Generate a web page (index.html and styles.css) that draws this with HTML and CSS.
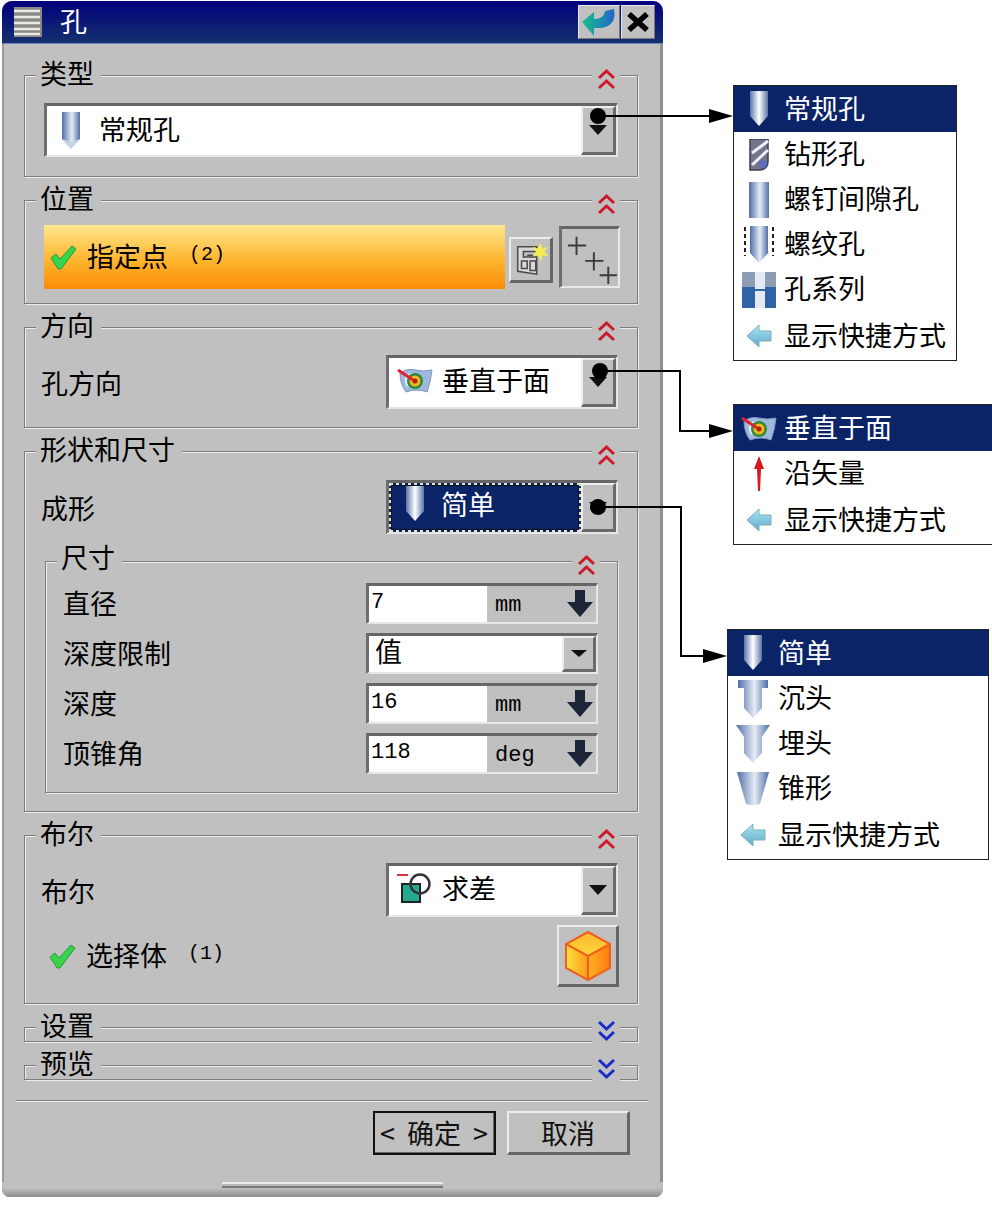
FILE: index.html
```html
<!DOCTYPE html>
<html lang="zh-CN">
  <head>
    <meta charset="UTF-8" />
    <title>孔</title>
    <link rel="stylesheet" href="styles.css">
  </head>
  <body>
    <svg class="defs" aria-hidden="true">
      <defs>
        <linearGradient id="gHole">
          <stop offset="0" stop-color="#4f6fa8" />
          <stop offset="0.55" stop-color="#e6ebf5" />
          <stop offset="1" stop-color="#4f6fa8" />
        </linearGradient>
        <linearGradient id="gHoleSel">
          <stop offset="0" stop-color="#5a75a8" />
          <stop offset="0.5" stop-color="#ffffff" />
          <stop offset="1" stop-color="#5a75a8" />
        </linearGradient>
        <linearGradient id="gArrow" x1="0" y1="0" x2="0" y2="1">
          <stop offset="0" stop-color="#a8e6f0" />
          <stop offset="1" stop-color="#5fa8cc" />
        </linearGradient>
        <linearGradient id="gCubeTop" x1="0" y1="0" x2="0" y2="1">
          <stop offset="0" stop-color="#ffb52e" />
          <stop offset="1" stop-color="#ffd93a" />
        </linearGradient>
        <linearGradient id="gCubeLeft" x1="0" y1="0" x2="1" y2="0">
          <stop offset="0" stop-color="#ffe23c" />
          <stop offset="1" stop-color="#ff9a1e" />
        </linearGradient>
        <linearGradient id="gCubeRight" x1="0" y1="0" x2="1" y2="0">
          <stop offset="0" stop-color="#ffb324" />
          <stop offset="1" stop-color="#ff7a10" />
        </linearGradient>
        <linearGradient id="gBack" x1="0" y1="0" x2="1" y2="0">
          <stop offset="0" stop-color="#14c08c" />
          <stop offset="1" stop-color="#2266c8" />
        </linearGradient>
      </defs>
      <symbol id="i-hole" viewBox="0 0 20 38">
        <path d="M1 0H19V27L10 37L1 27Z" fill="url(#gHole)" />
        <path d="M1 27L10 37L19 27L10 30Z" fill="#c8d3e6" />
      </symbol>
      <symbol id="i-hole-sel" viewBox="0 0 20 36">
        <path d="M1 0H19V25L10 35L1 25Z" fill="url(#gHoleSel)" />
      </symbol>
      <symbol id="i-drill" viewBox="0 0 20 32">
        <path d="M1 0H19V22Q19 31 10 31H1Z" fill="#73758a" stroke="#3c3f55" stroke-width="1.5" />
        <path d="M19 2L3 14M19 11L3 26" stroke="#f0f0f6" stroke-width="3" fill="none" />
        <circle cx="14" cy="25" r="4" fill="#5a6cc0" />
      </symbol>
      <symbol id="i-clear" viewBox="0 0 20 36">
        <rect width="20" height="36" fill="url(#gHole)" />
      </symbol>
      <symbol id="i-thread" viewBox="0 0 30 38">
        <path d="M6 0H24V27L15 37L6 27Z" fill="url(#gHole)" />
        <path d="M1 1V30M29 1V30" stroke="#222" stroke-width="2" stroke-dasharray="4 3" fill="none" />
      </symbol>
      <symbol id="i-series" viewBox="0 0 34 36">
        <rect width="13" height="15" fill="#8b9cb3" />
        <rect x="23" width="11" height="15" fill="#8b9cb3" />
        <rect y="15" width="13" height="21" fill="#2f63a6" />
        <rect x="23" y="15" width="11" height="21" fill="#2f63a6" />
        <rect x="13" width="10" height="36" fill="#e4e9f3" />
        <rect x="13" y="17" width="10" height="2" fill="#2f63a6" />
      </symbol>
      <symbol id="i-left" viewBox="0 0 26 24">
        <path d="M1 12L13 1V7H25V17H13V23Z" fill="url(#gArrow)" stroke="#7fb0bc" />
      </symbol>
      <symbol id="i-normal" viewBox="0 0 36 26">
        <path d="M3 6Q10 1 18 3T35 3Q34 14 30 25Q20 21 9 25Q3 17 3 6Z" fill="#9fb8dc" stroke="#7c96c0" />
        <path d="M8 8Q14 5 20 7L10 20Q7 15 8 8Z" fill="#e2ecf8" />
        <circle cx="18" cy="14" r="8" fill="#2c8a3c" />
        <circle cx="18" cy="14" r="5.5" fill="#f4b41c" />
        <circle cx="18" cy="14" r="2.5" fill="#a82010" />
        <path d="M1 3L16 13" stroke="#e0202c" stroke-width="3" />
      </symbol>
      <symbol id="i-up" viewBox="0 0 10 36">
        <path d="M5 0L10 13H7L6 35H4L3 13H0Z" fill="#d81820" />
      </symbol>
      <symbol id="i-cbore" viewBox="0 0 30 38">
        <path d="M0 0H30V8H24V28L15 38L6 28V8H0Z" fill="url(#gHole)" />
      </symbol>
      <symbol id="i-csink" viewBox="0 0 34 38">
        <path d="M0 0H34L26 12V28L17 38L8 28V12Z" fill="url(#gHole)" />
      </symbol>
      <symbol id="i-taper" viewBox="0 0 32 34">
        <path d="M0 0H32L23 32Q16 34 9 32Z" fill="url(#gHole)" />
      </symbol>
      <symbol id="i-check" viewBox="0 0 28 26">
        <path d="M2 14L7 10L11 15L23 2L27 5L12 25H9Z" fill="#35d44a" stroke="#2a9a3a" />
      </symbol>
      <symbol id="i-up-chev" viewBox="0 0 19 22">
        <path d="M2 10L9.5 3L17 10M2 20L9.5 13L17 20" fill="none" stroke="#cc1a2c" stroke-width="3" />
      </symbol>
      <symbol id="i-down-chev" viewBox="0 0 19 22">
        <path d="M2 2L9.5 9L17 2M2 12L9.5 19L17 12" fill="none" stroke="#1c2cc8" stroke-width="3" />
      </symbol>
      <symbol id="i-spin" viewBox="0 0 28 30">
        <path d="M9 1H19V13H27L14 28L1 13H9Z" fill="#1c2438" />
      </symbol>
      <symbol id="i-sub" viewBox="0 0 36 30">
        <path d="M0 2H11" stroke="#d83040" stroke-width="2" />
        <rect x="5" y="11" width="18" height="18" fill="#24a890" stroke="#222" stroke-width="2" />
        <circle cx="23" cy="11" r="9.5" fill="none" stroke="#333" stroke-width="2.5" />
      </symbol>
      <symbol id="i-cube" viewBox="0 0 48 52">
        <path d="M24 2L46 14L24 26L2 14Z" fill="url(#gCubeTop)" />
        <path d="M2 14L24 26V50L2 38Z" fill="url(#gCubeLeft)" />
        <path d="M46 14L24 26V50L46 38Z" fill="url(#gCubeRight)" />
        <path d="M24 2L46 14V38L24 50L2 38V14ZM2 14L24 26L46 14M24 26V50" fill="none" stroke="#f0601c" stroke-width="2" />
      </symbol>
      <symbol id="i-pts" viewBox="0 0 40 40">
        <path d="M6 7H26V12H12V18H26V36L6 33ZM16 16H22M10 22H16V30H10ZM19 22H25V32H19Z" fill="#d8d8d8" stroke="#4a4a4a" stroke-width="1.6" />
        <path d="M30 3L32 9L38 7L34 12L38 17L32 16L30 22L27 16L22 17L25 12L22 7L27 9Z" fill="#f4ee50" />
      </symbol>
      <symbol id="i-plus" viewBox="0 0 56 54">
        <path d="M5 14H24M14 5V24M23 30H42M32 21V40M38 45H56M47 36V54" stroke="#3a3a3a" stroke-width="2" fill="none" />
      </symbol>
      <symbol id="i-menu" viewBox="0 0 28 30">
        <rect width="28" height="30" fill="#8a8a86" />
        <path d="M0 4H26M0 10H26M0 16H26M0 22H26M0 27H26" stroke="#e8e8e4" stroke-width="2.6" />
      </symbol>
      <symbol id="i-back" viewBox="0 0 36 32">
        <path d="M33 3Q36 20 20 22L13 22V30L1 16L13 6V13Q23 13 24 5Z" fill="url(#gBack)" />
      </symbol>
      <symbol id="i-close" viewBox="0 0 24 22">
        <path d="M3 3L21 19M21 3L3 19" stroke="#000" stroke-width="5.5" fill="none" />
      </symbol>
    </svg>

    <div class="page">
      <div class="dialog">
        <div class="titlebar">
          <svg class="menu-icon"><use href="#i-menu" /></svg>
          <span class="title">孔</span>
          <span class="title-btn title-back"><svg class="ic-back"><use href="#i-back" /></svg></span>
          <span class="title-btn title-close"><svg class="ic-close"><use href="#i-close" /></svg></span>
        </div>

        <div class="body">
          <section class="group g-type">
            <span class="legend">类型</span>
            <span class="chev"><svg class="ic-chev"><use href="#i-up-chev" /></svg></span>
            <div class="combo combo-wide">
              <div class="combo-val pad-type">
                <svg class="ic-hole"><use href="#i-hole" /></svg>
                <span class="type-text">常规孔</span>
              </div>
              <span class="combo-btn"><i class="tri"></i></span>
            </div>
          </section>

          <section class="group g-pos">
            <span class="legend">位置</span>
            <span class="chev"><svg class="ic-chev"><use href="#i-up-chev" /></svg></span>
            <div class="pos-row">
              <div class="pos-bar">
                <svg class="ic-check"><use href="#i-check" /></svg>
                <span>指定点</span>
                <span class="count">(2)</span>
              </div>
              <span class="raised pts-btn"><svg class="ic-pts"><use href="#i-pts" /></svg></span>
              <span class="plus-box"><svg class="ic-plus"><use href="#i-plus" /></svg></span>
            </div>
          </section>

          <section class="group g-dir">
            <span class="legend">方向</span>
            <span class="chev"><svg class="ic-chev"><use href="#i-up-chev" /></svg></span>
            <div class="form-row">
              <label>孔方向</label>
              <div class="combo combo-small">
                <div class="combo-val">
                  <svg class="ic-normal"><use href="#i-normal" /></svg>
                  <span>垂直于面</span>
                </div>
                <span class="combo-btn"><i class="tri"></i></span>
              </div>
            </div>
          </section>

          <section class="group g-shape">
            <span class="legend">形状和尺寸</span>
            <span class="chev"><svg class="ic-chev"><use href="#i-up-chev" /></svg></span>
            <div class="form-row">
              <label>成形</label>
              <div class="combo combo-small">
                <div class="combo-val focused">
                  <svg class="ic-simple"><use href="#i-hole-sel" /></svg>
                  <span>简单</span>
                </div>
                <span class="combo-btn"><i class="tri"></i></span>
              </div>
            </div>

            <section class="group subgroup">
              <span class="legend">尺寸</span>
              <span class="chev"><svg class="ic-chev"><use href="#i-up-chev" /></svg></span>
              <div class="dim-row">
                <label>直径</label>
                <div class="field">
                  <span class="field-val">7</span>
                  <span class="unit">mm</span>
                  <svg class="ic-spin"><use href="#i-spin" /></svg>
                </div>
              </div>
              <div class="dim-row">
                <label>深度限制</label>
                <div class="field field-select">
                  <span class="select-val">值</span>
                  <span class="combo-btn"><i class="tri tri-small"></i></span>
                </div>
              </div>
              <div class="dim-row">
                <label>深度</label>
                <div class="field">
                  <span class="field-val">16</span>
                  <span class="unit">mm</span>
                  <svg class="ic-spin"><use href="#i-spin" /></svg>
                </div>
              </div>
              <div class="dim-row">
                <label>顶锥角</label>
                <div class="field">
                  <span class="field-val">118</span>
                  <span class="unit">deg</span>
                  <svg class="ic-spin"><use href="#i-spin" /></svg>
                </div>
              </div>
            </section>
          </section>

          <section class="group g-bool">
            <span class="legend">布尔</span>
            <span class="chev"><svg class="ic-chev"><use href="#i-up-chev" /></svg></span>
            <div class="form-row">
              <label>布尔</label>
              <div class="combo combo-small">
                <div class="combo-val">
                  <svg class="ic-sub"><use href="#i-sub" /></svg>
                  <span>求差</span>
                </div>
                <span class="combo-btn"><i class="tri"></i></span>
              </div>
            </div>
            <div class="body-row">
              <div class="body-pick">
                <svg class="ic-check"><use href="#i-check" /></svg>
                <span>选择体</span>
                <span class="count">(1)</span>
              </div>
              <span class="raised cube-btn"><svg class="ic-cube"><use href="#i-cube" /></svg></span>
            </div>
          </section>

          <section class="group g-closed">
            <span class="legend">设置</span>
            <span class="chev"><svg class="ic-chev"><use href="#i-down-chev" /></svg></span>
          </section>

          <section class="group g-closed">
            <span class="legend">预览</span>
            <span class="chev"><svg class="ic-chev"><use href="#i-down-chev" /></svg></span>
          </section>

          <div class="separator"></div>

          <div class="actions">
            <button class="btn btn-default">&lt; 确定 &gt;</button>
            <button class="btn">取消</button>
          </div>
        </div>

        <div class="footer"><span class="grip"></span></div>
      </div>

      <ul class="popup popup-type">
        <li class="selected"><span class="pop-ic"><svg class="ic-simple-pop"><use href="#i-hole-sel" /></svg></span><span class="pop-text">常规孔</span></li>
        <li><span class="pop-ic"><svg class="ic-drill"><use href="#i-drill" /></svg></span><span class="pop-text">钻形孔</span></li>
        <li><span class="pop-ic"><svg class="ic-clear"><use href="#i-clear" /></svg></span><span class="pop-text">螺钉间隙孔</span></li>
        <li><span class="pop-ic"><svg class="ic-thread"><use href="#i-thread" /></svg></span><span class="pop-text">螺纹孔</span></li>
        <li><span class="pop-ic"><svg class="ic-series"><use href="#i-series" /></svg></span><span class="pop-text">孔系列</span></li>
        <li><span class="pop-ic"><svg class="ic-left"><use href="#i-left" /></svg></span><span class="pop-text">显示快捷方式</span></li>
      </ul>

      <ul class="popup popup-dir">
        <li class="selected"><span class="pop-ic"><svg class="ic-normal"><use href="#i-normal" /></svg></span><span class="pop-text">垂直于面</span></li>
        <li><span class="pop-ic"><svg class="ic-up"><use href="#i-up" /></svg></span><span class="pop-text">沿矢量</span></li>
        <li><span class="pop-ic"><svg class="ic-left"><use href="#i-left" /></svg></span><span class="pop-text">显示快捷方式</span></li>
      </ul>

      <ul class="popup popup-shape">
        <li class="selected"><span class="pop-ic"><svg class="ic-simple-pop"><use href="#i-hole-sel" /></svg></span><span class="pop-text">简单</span></li>
        <li><span class="pop-ic"><svg class="ic-cbore"><use href="#i-cbore" /></svg></span><span class="pop-text">沉头</span></li>
        <li><span class="pop-ic"><svg class="ic-csink"><use href="#i-csink" /></svg></span><span class="pop-text">埋头</span></li>
        <li><span class="pop-ic"><svg class="ic-taper"><use href="#i-taper" /></svg></span><span class="pop-text">锥形</span></li>
        <li><span class="pop-ic"><svg class="ic-left"><use href="#i-left" /></svg></span><span class="pop-text">显示快捷方式</span></li>
      </ul>

      <!-- callout lines from the dropdown buttons to their menus -->
      <svg class="callouts" viewBox="0 0 992 1208">
        <circle cx="598" cy="116" r="8" />
        <path class="line" d="M598 116H715" />
        <path d="M709 109L733 116L709 123Z" />
        <circle cx="600" cy="371" r="8" />
        <path class="line" d="M600 371H680V431H715" />
        <path d="M709 424L733 431L709 438Z" />
        <circle cx="598" cy="507" r="8" />
        <path class="line" d="M598 507H681V656H710" />
        <path d="M703 649L727 656L703 663Z" />
      </svg>
    </div>
  </body>
</html>
```

FILE: styles.css
```css
* {
  box-sizing: border-box;
  margin: 0;
  padding: 0;
}

body {
  background: #fff;
  color: #000;
  font-family: "Noto Sans CJK SC", "Liberation Sans", sans-serif;
  font-size: 27px;
  line-height: 1;
  overflow: hidden;
}

.defs {
  position: absolute;
  width: 0;
  height: 0;
}

.page {
  position: relative;
  width: 992px;
  height: 1208px;
  overflow: hidden;
  padding: 1px 0 0 2px;
}

/* dialog frame */

.dialog {
  width: 661px;
  background: #c0c0c0;
  border-radius: 10px 10px 8px 8px;
  overflow: hidden;
  box-shadow: inset -3px 0 0 #8f8f8f, inset 2px 0 0 #9a9a9a;
}

.titlebar {
  display: flex;
  align-items: center;
  height: 43px;
  padding: 0 8px 0 12px;
  background: linear-gradient(#00007c, #15316e);
  border-bottom: 1px solid #6f86bd;
}

.menu-icon {
  width: 28px;
  height: 30px;
}

.title {
  margin-left: 18px;
  padding-bottom: 3px;
  color: #fff;
  flex: 1;
}

.title-btn {
  display: flex;
  align-items: center;
  justify-content: center;
  height: 34px;
  background: #c0c0c0;
  border: 1px solid;
  border-color: #e8e8e8 #777 #777 #e8e8e8;
}

.title-back {
  width: 42px;
}

.title-close {
  width: 34px;
  margin-left: 1px;
}

.ic-back {
  width: 36px;
  height: 32px;
}

.ic-close {
  width: 24px;
  height: 22px;
}

.body {
  display: flex;
  flex-direction: column;
  gap: 23px;
  padding: 31px 25px 0 22px;
}

/* group frames */

.group {
  position: relative;
  border: 1px solid #7d7d7d;
  box-shadow: inset 1px 1px 0 #ececec, 1px 1px 0 #ececec;
  padding: 0 19px 0 16px;
}

.legend {
  position: absolute;
  left: 11px;
  top: -17px;
  padding: 0 7px 0 4px;
  background: #c0c0c0;
  line-height: 28px;
}

.chev {
  position: absolute;
  right: 17px;
  top: -10px;
  width: 28px;
  height: 26px;
  display: flex;
  justify-content: center;
  align-items: center;
  background: #c0c0c0;
}

.ic-chev {
  width: 19px;
  height: 22px;
}

.g-type {
  padding-top: 27px;
  padding-bottom: 19px;
}

.g-pos {
  padding-top: 24px;
  padding-bottom: 14px;
}

.g-dir {
  padding-top: 27px;
  padding-bottom: 18px;
}

.g-shape {
  padding-top: 28px;
  padding-bottom: 18px;
}

.g-bool {
  padding-top: 27px;
  padding-bottom: 16px;
}

.g-closed {
  height: 15px;
  padding: 0;
}

.subgroup {
  margin: 27px 0 0 4px;
  padding: 21px 19px 9px 17px;
}

.subgroup .legend {
  top: -19px;
}

/* combo boxes */

.combo {
  display: flex;
  height: 54px;
  border-style: solid;
  border-width: 3px 2px 2px 3px;
  border-color: #666 #e6e6e6 #e6e6e6 #6e6e6e;
}

.combo-wide {
  margin-left: 3px;
}

.combo-small {
  width: 232px;
}

.combo-val {
  flex: 1;
  display: flex;
  align-items: center;
  gap: 9px;
  padding: 0 0 6px 8px;
  background: #fff;
  min-width: 0;
}

.pad-type {
  gap: 18px;
  padding-left: 14px;
  padding-bottom: 0;
}

.type-text {
  padding-bottom: 5px;
}

.combo-val.focused {
  margin: 0;
  gap: 16px;
  padding: 0 0 8px 13px;
  background: #0b2468;
  color: #fff;
  border: 3px dotted #e4e4cc;
  outline: 1px solid #111;
  outline-offset: -3px;
}

.combo-btn {
  flex: none;
  width: 35px;
  display: flex;
  align-items: center;
  justify-content: center;
  background: #c0c0c0;
  border-style: solid;
  border-width: 2px 3px 3px 2px;
  border-color: #ededed #6a6a6a #6a6a6a #ededed;
}

.tri {
  border-style: solid;
  border-width: 10px 9px 0;
  border-color: #111 transparent transparent;
}

.tri-small {
  border-width: 7px 8px 0;
}

.ic-hole {
  width: 20px;
  height: 38px;
}

.ic-normal {
  width: 36px;
  height: 26px;
}

.ic-simple {
  width: 20px;
  height: 36px;
}

.ic-sub {
  width: 36px;
  height: 30px;
}

/* position row */

.pos-row {
  display: flex;
  align-items: center;
  height: 64px;
  margin-left: 3px;
}

.pos-row > * {
  flex: none;
}

.pos-bar {
  width: 461px;
  height: 64px;
  display: flex;
  align-items: center;
  padding: 0 0 4px 5px;
  background: linear-gradient(#ffe78e, #ffb52f 55%, #fb8c06);
}

.ic-check {
  width: 28px;
  height: 26px;
  margin: 4px 10px 0 0;
}

.count {
  margin-left: 21px;
  font-family: "Liberation Mono", monospace;
  font-size: 20px;
}

.raised {
  display: flex;
  align-items: center;
  justify-content: center;
  background: #c0c0c0;
  border-style: solid;
  border-width: 2px 3px 3px 2px;
  border-color: #ececec #666 #666 #ececec;
}

.pts-btn {
  width: 44px;
  height: 46px;
  margin: 5px 0 0 4px;
}

.ic-pts {
  width: 38px;
  height: 38px;
}

.plus-box {
  width: 61px;
  height: 62px;
  margin-left: 6px;
  border-style: solid;
  border-width: 3px 2px 2px 3px;
  border-color: #666 #e8e8e8 #e8e8e8 #6e6e6e;
  display: flex;
  align-items: center;
  justify-content: center;
}

.ic-plus {
  width: 54px;
  height: 52px;
}

/* label + control rows */

.form-row {
  display: flex;
  justify-content: space-between;
  align-items: center;
}

.dim-row {
  display: flex;
  justify-content: space-between;
  align-items: center;
  height: 40px;
  margin-bottom: 10px;
}

.dim-row label {
  padding-bottom: 2px;
}

.field {
  width: 232px;
  height: 41px;
  display: flex;
  align-items: center;
  border-style: solid;
  border-width: 3px 2px 2px 3px;
  border-color: #666 #e6e6e6 #e6e6e6 #6e6e6e;
}

.field-val {
  width: 118px;
  height: 100%;
  padding: 6px 0 0 2px;
  background: #fff;
  font-family: "Liberation Mono", monospace;
  font-size: 22px;
}

.unit {
  flex: 1;
  padding: 4px 0 0 8px;
  font-family: "Liberation Mono", monospace;
  font-size: 22px;
}

.ic-spin {
  width: 28px;
  height: 30px;
  margin-right: 2px;
}

.field-select .select-val {
  flex: 1;
  height: 100%;
  padding: 1px 0 0 6px;
  background: #fff;
}

.field-select .combo-btn {
  height: 100%;
  width: 34px;
}

.body-row {
  display: flex;
  justify-content: space-between;
  align-items: center;
  margin-top: 8px;
}

.body-pick {
  display: flex;
  align-items: center;
  padding: 0 0 4px 7px;
}

.cube-btn {
  width: 62px;
  height: 62px;
  margin-right: -1px;
}

.ic-cube {
  width: 48px;
  height: 52px;
}

/* bottom of the dialog */

.separator {
  height: 2px;
  margin: -3px -10px 0 -8px;
  background: #808080;
  border-bottom: 1px solid #ececec;
}

.actions {
  display: flex;
  justify-content: flex-end;
  gap: 11px;
  margin: -14px 8px 0 0;
}

.btn {
  width: 123px;
  height: 44px;
  padding-bottom: 6px;
  background: #c0c0c0;
  color: #111;
  font-family: inherit;
  font-size: 27px;
  word-spacing: 6px;
  border-style: solid;
  border-width: 2px 3px 3px 2px;
  border-color: #ededed #666 #666 #ededed;
}

.btn-default {
  outline: 2px solid #111;
  outline-offset: -2px;
}

.footer {
  display: flex;
  justify-content: center;
  margin-top: 27px;
  padding-bottom: 9px;
  background: linear-gradient(#c0c0c0 40%, #8d8d8d);
}

.grip {
  width: 221px;
  height: 6px;
  background: #b8b8b8;
  border-top: 2px solid #ececec;
  border-bottom: 2px solid #777;
}

/* dropdown menus floating beside the dialog */

.popup {
  position: absolute;
  list-style: none;
  background: #fff;
  border: 1px solid #222;
}

.popup-type {
  left: 733px;
  top: 85px;
  width: 224px;
}

.popup-dir {
  left: 733px;
  top: 404px;
  width: 270px;
}

.popup-shape {
  left: 727px;
  top: 629px;
  width: 262px;
}

.popup li {
  display: flex;
  align-items: center;
  height: 45px;
}

.popup li.selected {
  height: 46px;
  background: #0b2468;
  color: #fff;
}

.popup li:last-child {
  height: 48px;
}

.pop-text {
  padding-bottom: 4px;
}

.pop-ic {
  flex: none;
  width: 50px;
  display: flex;
  justify-content: center;
  align-items: center;
}

.ic-simple-pop {
  width: 20px;
  height: 36px;
}

.ic-drill {
  width: 20px;
  height: 32px;
}

.ic-clear {
  width: 20px;
  height: 36px;
}

.ic-thread {
  width: 30px;
  height: 38px;
}

.ic-series {
  width: 34px;
  height: 36px;
}

.ic-left {
  width: 26px;
  height: 24px;
}

.ic-up {
  width: 10px;
  height: 36px;
}

.ic-cbore {
  width: 30px;
  height: 38px;
}

.ic-csink {
  width: 34px;
  height: 38px;
}

.ic-taper {
  width: 32px;
  height: 34px;
}

.callouts {
  position: absolute;
  left: 0;
  top: 0;
  width: 992px;
  height: 1208px;
  pointer-events: none;
}

.callouts .line {
  fill: none;
  stroke: #000;
  stroke-width: 2;
}
```
